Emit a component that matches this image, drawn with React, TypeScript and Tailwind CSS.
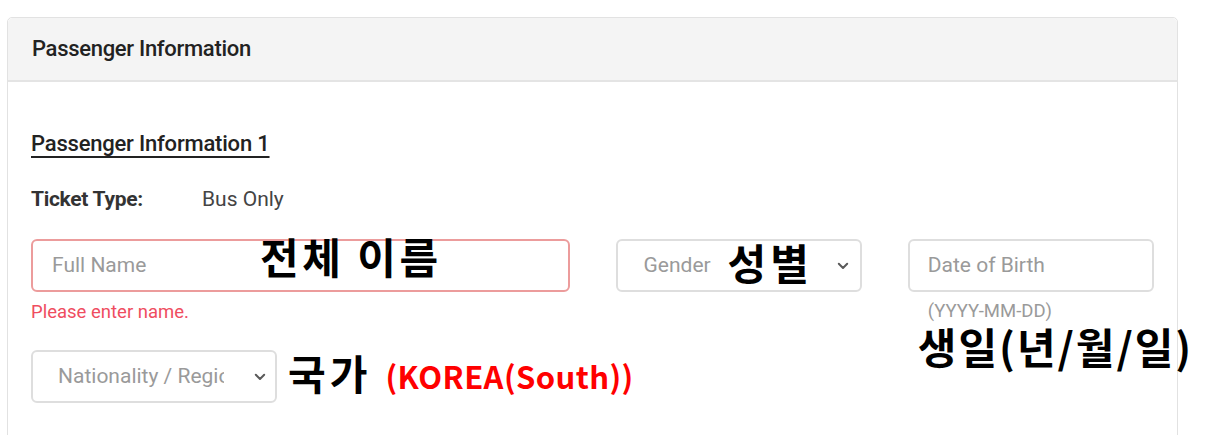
import React from "react";

const Chevron = () => (
  <svg width="12" height="8" viewBox="0 0 12 8" fill="none" className="shrink-0">
    <path d="M1.8 1.8L6 6l4.2-4.2" stroke="#5a5a5a" strokeWidth="2" strokeLinecap="round" strokeLinejoin="round" />
  </svg>
);

const ko = "font-['Noto_Sans_CJK_KR','Malgun_Gothic',sans-serif]";

export default function App() {
  return (
    <div className="pl-[7px] pt-[17px] bg-white h-[435px] overflow-hidden font-['Roboto','Liberation_Sans',sans-serif]">
      <div className="w-[1171px] border border-[#e2e2e2] rounded-t-[5px] bg-white h-[500px]">
        <div className="h-[64px] bg-[#f4f4f4] border-b-2 border-[#e4e4e4] flex items-center pl-[24px] rounded-t-[5px]">
          <span className="text-[22px] leading-[24px] font-medium text-[#222] tracking-[-0.3px]">Passenger Information</span>
        </div>

        <div className="px-[23px] pt-[50px]">
          <div className="inline-block text-[22px] leading-[24px] font-medium text-[#222] underline underline-offset-[5px] decoration-[1.5px] tracking-[-0.2px]">
            Passenger Information 1
          </div>

          <div className="mt-[29px] flex items-center text-[21px] leading-[24px]">
            <span className="w-[171px] font-bold text-[#333] tracking-[-0.3px]">Ticket Type:</span>
            <span className="text-[#444]">Bus Only</span>
          </div>

          <div className="mt-[28px] grid grid-cols-4 gap-x-[46px]">
            <div className="col-span-2 relative">
              <div className="h-[53px] border-2 border-[#ec9c9c] rounded-[6px] flex items-center pl-[19px] text-[21px] text-[#9a9a9a]">
                Full Name
              </div>
              <div className="mt-[10px] text-[18.5px] leading-[20px] text-[#ef4d5f]">Please enter name.</div>
              <span className={`absolute left-[229px] top-[-4px] text-[42px] tracking-[3.5px] font-bold text-black leading-none whitespace-nowrap ${ko}`}>
                전체 이름
              </span>
            </div>

            <div className="relative">
              <div className="h-[53px] border-2 border-[#dedede] rounded-[6px] flex items-center justify-between pl-[26px] pr-[11px] text-[21px] text-[#9a9a9a]">
                <span>Gender</span>
                <Chevron />
              </div>
              <span className={`absolute left-[112px] top-[2px] text-[42px] tracking-[4px] font-bold text-black leading-none whitespace-nowrap ${ko}`}>
                성별
              </span>
            </div>

            <div className="relative">
              <div className="h-[53px] border-2 border-[#dedede] rounded-[6px] flex items-center pl-[18px] text-[21px] text-[#9a9a9a]">
                Date of Birth
              </div>
              <div className="mt-[10px] pl-[20px] text-[18.5px] leading-[18px] text-[#9a9a9a]">(YYYY-MM-DD)</div>
              <span className={`absolute left-[10px] top-[86px] text-[42px] tracking-[2px] font-bold text-black leading-none whitespace-nowrap ${ko}`}>
                생일(년/월/일)
              </span>
            </div>
          </div>

          <div className="mt-[28px] flex items-end">
            <div className="w-[246px] h-[53px] border-2 border-[#dedede] rounded-[6px] flex items-center justify-between pl-[25px] pr-[9px] text-[21px] text-[#9a9a9a]">
              <span className="w-[166px] overflow-hidden whitespace-nowrap">Nationality / Region</span>
              <Chevron />
            </div>
            <span className={`ml-[11px] mb-[10px] text-[41px] tracking-[4px] font-semibold text-black leading-none ${ko}`}>국가</span>
            <span className={`ml-[14px] mb-[12px] text-[31px] tracking-[0.4px] font-bold text-[#ff0000] leading-none ${ko}`}>
              (KOREA(South))
            </span>
          </div>
        </div>
      </div>
    </div>
  );
}
